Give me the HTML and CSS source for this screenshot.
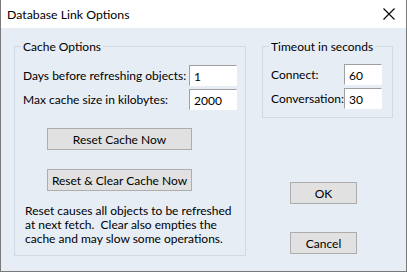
FILE: index.html
```html
<!DOCTYPE html>
<html lang="en">
<head>
    <meta charset="UTF-8">
    <title>Database Link Options</title>
    <link rel="stylesheet" href="styles.css">
</head>
<body>
    <div id="dialog">
        <div id="titlebar">
            <span class="title">Database Link Options</span>
            <button class="close" type="button">
                <svg width="12" height="12" viewBox="0 0 12 12">
                    <path d="M0.5 0.5 L11.5 11.5 M11.5 0.5 L0.5 11.5" stroke="#000" stroke-width="1.1" fill="none"/>
                </svg>
            </button>
        </div>
        <div id="content">
            <fieldset class="group cache">
                <legend>Cache Options</legend>
                <div class="field">
                    <label>Days before refreshing objects:</label>
                    <input class="edit wide" value="1">
                </div>
                <div class="field">
                    <label>Max cache size in kilobytes:</label>
                    <input class="edit wide" value="2000">
                </div>
                <button class="btn reset" type="button">Reset Cache Now</button>
                <button class="btn reset clear" type="button">Reset &amp; Clear Cache Now</button>
                <p class="note">Reset causes all objects to be refreshed<br>at next fetch.&nbsp; Clear also empties the<br>cache and may slow some operations.</p>
            </fieldset>
            <div class="side">
                <fieldset class="group timeout">
                    <legend>Timeout in seconds</legend>
                    <div class="field">
                        <label>Connect:</label>
                        <input class="edit small" value="60">
                    </div>
                    <div class="field">
                        <label>Conversation:</label>
                        <input class="edit small" value="30">
                    </div>
                </fieldset>
                <button class="btn action ok" type="button">OK</button>
                <button class="btn action" type="button">Cancel</button>
            </div>
        </div>
    </div>
</body>
</html>
```

FILE: styles.css
```css
html, body {
    margin: 0;
    padding: 0;
    background: #ffffff;
}

body {
    font-family: Lato, "Liberation Sans", sans-serif;
    font-size: 12px;
    color: #000;
}

#dialog {
    width: 407px;
    height: 272px;
    box-sizing: border-box;
    border: 1px solid #7a7a7a;
    border-top: none;
    display: flex;
    flex-direction: column;
}

#titlebar {
    height: 28px;
    flex: none;
    background: #ffffff;
    display: flex;
    align-items: center;
    justify-content: space-between;
    padding-left: 6px;
}

#titlebar .title {
    font-size: 12.3px;
    margin-top: 1px;
}

.close {
    border: none;
    background: none;
    padding: 0;
    width: 30px;
    height: 28px;
    display: flex;
    align-items: center;
    justify-content: center;
    margin-right: 2px;
}

#content {
    flex: 1;
    background: #e7edf5;
    display: flex;
    padding: 12px 0 0 13px;
    gap: 16px;
}

/* group boxes */
.group {
    margin: 0;
    border: 1px solid #d3d9e0;
    box-sizing: border-box;
    padding: 0 8px;
}

.group legend {
    padding: 0 2px;
    margin-left: -2px;
    line-height: 13px;
}

label {
    white-space: nowrap;
}

.cache {
    width: 232px;
    height: 216px;
    display: flex;
    flex-direction: column;
}

.field {
    display: flex;
    align-items: center;
    justify-content: space-between;
    height: 21px;
}

.cache .field:first-of-type {
    margin-top: 12px;
}

.cache .field + .field {
    margin-top: 3px;
}

.edit {
    box-sizing: border-box;
    height: 21px;
    border: 1px solid;
    border-color: #a0a0a0 #ffffff #ffffff #a0a0a0;
    background: #ffffff;
    font: inherit;
    padding: 2px 0 0 4px;
    outline: none;
}

.wide {
    width: 48px;
    margin-right: 0;
}

.small {
    width: 38px;
}

.btn {
    font: inherit;
    background: #e1e1e1;
    border: 1px solid #adadad;
    padding: 0;
    height: 22px;
    color: #000;
}

.reset {
    width: 145px;
    margin: 18px 0 0 24px;
}

.reset.clear {
    margin-top: 19px;
}

.note {
    margin: 13px 0 0 2px;
    line-height: 14px;
    white-space: nowrap;
}

/* right column */
.side {
    width: 130px;
    display: flex;
    flex-direction: column;
    align-items: flex-start;
}

.timeout {
    width: 130px;
    height: 78px;
    padding-bottom: 0;
}

.timeout .field:first-of-type {
    margin-top: 11px;
}

.timeout .field + .field {
    margin-top: 3px;
}

.timeout .field {
    padding-right: 2px;
}

.action {
    width: 67px;
    margin-left: 28px;
}

.action.ok {
    margin-top: 64px;
    margin-bottom: 28px;
}
```
